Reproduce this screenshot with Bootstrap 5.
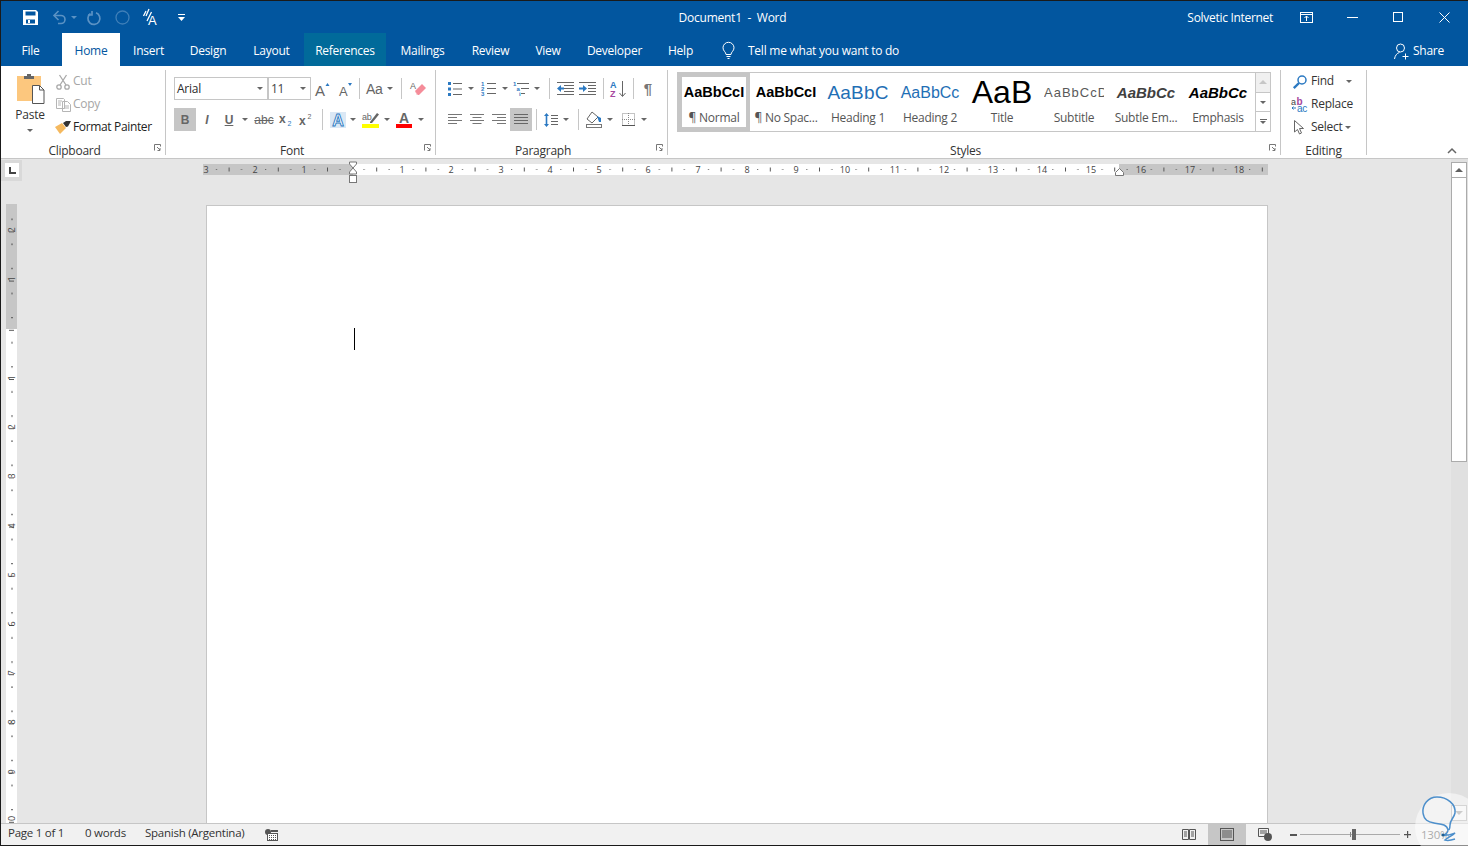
<!DOCTYPE html>
<html lang="en">
<head>
<meta charset="utf-8">
<title>Document1 - Word</title>
<link href="https://cdn.jsdelivr.net/npm/bootstrap@5.3.0/dist/css/bootstrap.min.css" rel="stylesheet">
<style>
html,body{margin:0;height:846px;overflow:hidden;background:#e6e6e6}
body{font-family:"Open Sans","Noto Sans",sans-serif;font-size:12px;letter-spacing:-.25px;color:#333;line-height:1.2}
svg{display:block;flex:none;overflow:visible}
.wd-window{width:1468px;height:846px;border:1px solid #1a1a1a;border-right:0;display:flex;flex-direction:column}
.wd-title{height:32px;background:#02569f;color:#fff;display:grid;grid-template-columns:1fr auto 1fr;align-items:center}
.wd-qat{padding-left:22px}
.wd-titletext{padding:2px 4px 0 0}
.wd-user{margin-right:10px;padding-top:2px;letter-spacing:-.3px}
.wd-winbtns{padding-right:1px}
.wd-winbtn{width:46px;height:32px;display:flex;align-items:center;justify-content:center}
.wd-tabs{height:33px;background:#02569f;flex-wrap:nowrap;align-items:stretch}
.wd-tabs .nav-link{padding:3px 0 0;height:33px;display:flex;align-items:center;justify-content:center;color:#fff;font-size:12px}
.wd-tabs .nav-link.active{background:#fff;color:#02569f}
.wd-tabs .nav-link.wd-hover{background:#016a9a}
.t-file{width:59px;margin-right:2px}.t-home{width:58px}.t-ins{width:57px}.t-des{width:62px}.t-lay{width:65px}.t-ref{width:82px}.t-mai{width:73px}.t-rev{width:63px}.t-vie{width:52px}.t-dev{width:81px}.t-hel{width:51px}
.wd-tell{margin-left:16px;display:flex;align-items:center;gap:13px;color:#fff;padding-top:3px}
.wd-share{margin-left:auto;margin-right:24px;display:flex;align-items:center;gap:4px;color:#fff;padding-top:3px}
.wd-ribbon{height:93px;background:#fff;border-bottom:1px solid #c6c6c6;display:flex;align-items:flex-start;flex:none}
.wd-grp{height:85px;margin-top:4px;border-right:1px solid #c6c6c6;display:flex;flex-direction:column;position:relative;flex:none}
.g-clip{width:165px}.g-font{width:270px;padding:7px 0 0 8px}.g-para{width:232px;padding:7px 0 0 8px}.g-styl{width:613px;padding:2px 0 0 9px}.g-edit{width:86px}
.wd-row{display:flex;align-items:center;height:23px}
.wd-row+.wd-row{margin-top:8px}
.wd-cell{display:flex;align-items:center;justify-content:center;height:23px;flex:none;color:#666}
.c4{width:4px}.c6{width:6px}.c8{width:8px}.c10{width:10px}.c12{width:12px}.c14{width:14px}.c16{width:16px}.c18{width:18px}.c20{width:20px}.c22{width:22px}.c23{width:23px}.c24{width:24px}.c26{width:26px}.c27{width:27px}.c28{width:28px}.c30{width:30px}
.wd-on{background:#c6c6c6}
.wd-sep{width:1px;height:21px;background:#c6c6c6}
.wd-crt{width:0;height:0;border-left:3px solid transparent;border-right:3px solid transparent;border-top:3px solid #666}
.wd-glabel{position:absolute;left:0;right:0;bottom:-1px;height:10px;line-height:10px;text-align:center;color:#333;padding-right:17px}
.g-edit .wd-glabel{padding-right:0}
.wd-launch{position:absolute;right:4px;top:-2px}
.wd-sel{border:1px solid #c6c6c6;height:23px;display:flex;align-items:center;justify-content:space-between;padding:2px 4px 0 2px;color:#2b2b2b;flex:none}
.wd-sel .wd-crt{margin-top:-2px}
.s-face{width:94px}
.s-size{width:43px}
.s-size span{color:#444}
.wd-glyph{font-family:"Liberation Sans",sans-serif;letter-spacing:0;font-size:12px;color:#666;line-height:1}
/* clipboard */
.wd-paste{width:50px;flex:none;display:flex;flex-direction:column;align-items:center;padding-top:3px}
.wd-paste .wd-crt{margin-top:7px}
.wd-clipbody{display:flex;padding-left:4px;height:70px}
.wd-item{display:flex;align-items:center;height:23px;gap:2px;white-space:nowrap}
.wd-item.off{color:#a6a6a6}
.wd-item>.wd-i16{width:16px;display:flex;justify-content:center}
.wd-fp{color:#222;letter-spacing:-.35px}
/* styles */
.wd-gal{width:594px;height:60px;border:1px solid #c6c6c6;display:flex;flex:none}
.wd-stylerow{display:flex;width:577px;flex:none}
.wd-sty{width:72px;height:58px;flex:none;display:flex;flex-direction:column;align-items:center;overflow:hidden;font-family:"Liberation Sans",sans-serif;letter-spacing:0;padding-top:5px}
.wd-sty.cur{border:4px solid #c6c6c6;padding-top:1px}
.wd-sample{height:30px;width:64px;overflow:hidden;white-space:nowrap;display:flex;align-items:center;justify-content:center;color:#000;flex:none}
.wd-sample.narrow{width:60px}
.wd-sample span{display:block;flex:none}
.wd-stylab{font-family:"Open Sans",sans-serif;letter-spacing:-.25px;color:#555;margin-top:3px;white-space:nowrap}
.smp-n{font-weight:700;font-size:14.5px}
.smp-h1{font-size:19px;color:#1f6fb5;letter-spacing:.2px}
.smp-h2{font-size:16px;color:#1f6fb5}
.smp-t{font-size:32px;line-height:30px;margin-bottom:2px}
.smp-s{font-size:13px;letter-spacing:1px;color:#595959}
.smp-e{font-weight:700;font-style:italic;font-size:15px;color:#404040}
.smp-x{font-weight:700;font-style:italic;font-size:15px}
.wd-galbtns{width:15px;border-left:1px solid #c6c6c6;display:flex;flex-direction:column;flex:none}
.wd-galbtns div{flex:1 1 0;display:flex;align-items:center;justify-content:center;flex-direction:column;gap:1px}
.wd-galbtns div+div{border-top:1px solid #c6c6c6}
.wd-galbtns .first{background:#f0f0f0}
.wd-galbtns .first .wd-up{border-bottom-color:#c6c6c6}
.wd-up{width:0;height:0;border-left:4px solid transparent;border-right:4px solid transparent;border-bottom:4px solid #666}
.wd-dash{width:7px;height:1px;background:#666}
/* editing */
.wd-editbody{padding-left:10px}
.wd-editbody .wd-item{gap:3px}
.wd-editbody .wd-i16{width:17px}
.wd-end{flex:1;height:85px;margin-top:4px;position:relative}
.wd-collapse{position:absolute;right:11px;bottom:1px}
/* document area */
.wd-main{flex:1;display:flex;min-height:0;background:#e6e6e6}
.wd-work{flex:1;min-width:0;overflow:hidden;display:flex;flex-direction:column}
.wd-hbar{height:46px;display:flex;flex:none}
.wd-corner{width:21px;height:21px;margin-top:1px;background:#d9d9d9;flex:none;padding:3px 4px}
.wd-corner div{width:14px;height:14px;background:#fff;display:flex;align-items:center;justify-content:center}
.wd-hruler{margin-left:181px;margin-top:2px}
.wd-vbar{flex:1;display:flex;min-height:0}
.wd-vruler{margin-left:5px;margin-right:189px;margin-top:-1px}
.wd-page{width:1062px;background:#fff;border:1px solid #c6c6c6;border-bottom:0;padding:122px 0 0 147px}
.wd-cursor{width:1px;height:22px;background:#000}
.wd-scroll{width:17px;background:#e0e0e0;display:flex;flex-direction:column;padding:3px 1px 2px 0;flex:none}
.wd-sbtn{height:16px;background:#fff;border:1px solid #ababab;display:flex;align-items:center;justify-content:center;flex:none}
.wd-thumb{height:284px;background:#fff;border:1px solid #ababab;border-top:0;flex:none}
.wd-sbtn.dn{margin-top:auto;background:#f1f1f1}
.wd-sdn{width:0;height:0;border-left:4px solid transparent;border-right:4px solid transparent;border-top:4px solid #999}
.wd-sup{width:0;height:0;border-left:4px solid transparent;border-right:4px solid transparent;border-bottom:4px solid #606060}
/* status */
.wd-status{height:22px;background:#f1f1f1;border-top:1px solid #c6c6c6;display:flex;align-items:center;flex:none;color:#333;font-size:11.5px;padding-left:7px}
.wd-st1,.wd-st2,.wd-st3{padding-bottom:3px}
.wd-st1{width:77px}.wd-st2{width:60px}.wd-st3{width:120px}
.wd-view{width:38px;height:21px;display:flex;align-items:center;justify-content:center;flex:none}
.wd-right{margin-left:auto;display:flex;align-items:center;height:21px}
.wd-views{margin-right:-1px}
.wd-zminus{margin-left:7px}
.wd-zbar{margin:0 4px 0 3px}
.wd-zoom{width:57px;padding-left:10px;color:#555}
.wd-mark{position:absolute;left:1414px;top:792px;pointer-events:none}
</style>
</head>
<body>
<div class="wd-window">
  <!-- Title bar -->
  <div class="wd-title">
    <div class="wd-qat d-flex align-items-center">
      <svg width="15" height="15" viewBox="0 0 15 15" style="margin-right:14px"><path fill="#fff" fill-rule="evenodd" d="M0 0h13l2 2v13H0zM2.500 1.500v4h10v-4zM3 9.500v4h9v-4z"/><rect x="5" y="10" width="2" height="3" fill="#fff"/></svg>
      <svg width="15" height="14" viewBox="0 0 15 14" fill="none" stroke="#5b92c4" stroke-width="1.600"><path d="M2.500 5.500H9a4 4 0 0 1 0 8H6"/><path d="M6.500 1 2 5.500 6.500 10"/></svg>
      <span class="wd-crt ms-1" style="border-top-color:#5b92c4"></span>
      <svg width="15" height="15" viewBox="0 0 15 15" fill="none" stroke="#5b92c4" stroke-width="1.700" style="margin-left:9px"><path d="M4.500 3.500a6 6 0 1 0 5.500-.7"/><path d="M6 1v4H2"/></svg>
      <svg width="15" height="15" viewBox="0 0 15 15" fill="none" stroke="#3f7fb8" stroke-width="1.300" style="margin-left:14px"><circle cx="7.500" cy="7.500" r="6.500"/></svg>
      <svg width="16" height="17" viewBox="0 0 16 17" style="margin-left:13px"><path d="M3 2 .5 7M6 0 3 7M8.500 3l-4.500 9" stroke="#fff" stroke-width="1.300" fill="none"/><text x="5" y="16" font-family="Liberation Sans" font-size="13" fill="#fff">A</text></svg>
      <svg width="7" height="7" viewBox="0 0 7 7" style="margin-left:19px"><path d="M0 .5h7" stroke="#fff"/><path d="M0 3h7L3.500 7z" fill="#fff"/></svg>
    </div>
    <div class="wd-titletext">Document1&nbsp; -&nbsp; Word</div>
    <div class="d-flex align-items-center justify-content-end wd-winbtns">
      <span class="wd-user">Solvetic Internet</span>
      <span class="wd-winbtn"><svg width="13" height="11" viewBox="0 0 13 11" fill="none" stroke="#fff"><rect x=".5" y=".5" width="12" height="10"/><path d="M.5 2.500h12M6.500 9V4M4.500 6l2-2 2 2"/></svg></span>
      <span class="wd-winbtn"><svg width="11" height="1"><rect width="11" height="1" fill="#fff"/></svg></span>
      <span class="wd-winbtn"><svg width="10" height="10" fill="none" stroke="#fff"><rect x=".5" y=".5" width="9" height="9"/></svg></span>
      <span class="wd-winbtn"><svg width="11" height="11" fill="none" stroke="#fff"><path d="M.5.500l10 10M10.500.500l-10 10"/></svg></span>
    </div>
  </div>
  <!-- Tabs -->
  <ul class="nav wd-tabs">
    <li class="nav-item"><a class="nav-link t-file" href="#">File</a></li>
    <li class="nav-item"><a class="nav-link active t-home" href="#">Home</a></li>
    <li class="nav-item"><a class="nav-link t-ins" href="#">Insert</a></li>
    <li class="nav-item"><a class="nav-link t-des" href="#">Design</a></li>
    <li class="nav-item"><a class="nav-link t-lay" href="#">Layout</a></li>
    <li class="nav-item"><a class="nav-link wd-hover t-ref" href="#">References</a></li>
    <li class="nav-item"><a class="nav-link t-mai" href="#">Mailings</a></li>
    <li class="nav-item"><a class="nav-link t-rev" href="#">Review</a></li>
    <li class="nav-item"><a class="nav-link t-vie" href="#">View</a></li>
    <li class="nav-item"><a class="nav-link t-dev" href="#">Developer</a></li>
    <li class="nav-item"><a class="nav-link t-hel" href="#">Help</a></li>
    <li class="wd-tell"><svg width="13" height="18" viewBox="0 0 13 18" fill="none" stroke="#fff"><path d="M4 12.500C4 10 1 9 1 5.800a5.500 5.500 0 0 1 11 0C12 9 9 10 9 12.500zM4.500 14.500h4M5.500 16.500h2"/></svg><span>Tell me what you want to do</span></li>
    <li class="wd-share"><svg width="15" height="17" viewBox="0 0 15 17" fill="none" stroke="#fff"><circle cx="6.500" cy="5" r="4"/><path d="M.5 16c.5-3.500 2.500-6 5-6.500M11.500 10.500v6M8.500 13.500h6"/></svg><span>Share</span></li>
  </ul>
  <!-- Ribbon -->
  <div class="wd-ribbon">
    <!-- Clipboard -->
    <section class="wd-grp g-clip">
      <div class="wd-clipbody">
        <div class="wd-paste">
          <svg width="29" height="32" viewBox="0 0 29 32"><rect x="1" y="3" width="24" height="25" fill="#fcc77e"/><path d="M8 6V3h3V1h4v2h3v3z" fill="#666"/><path d="M16.500 12.500h7l4.500 4.500v13.500H16.500z" fill="#fff" stroke="#555"/><path d="M23.500 12.500V17H28" fill="none" stroke="#555"/></svg>
          <span style="margin-top:3px">Paste</span>
          <span class="wd-crt"></span>
        </div>
        <div>
          <div class="wd-item off"><span class="wd-i16"><svg width="14" height="16" viewBox="0 0 14 16" fill="none" stroke="#a9a9a9" stroke-width="1.300"><circle cx="3" cy="13" r="2.200"/><circle cx="11" cy="13" r="2.200"/><path d="M4 11 10.500 1M10 11 3.500 1"/></svg></span><span>Cut</span></div>
          <div class="wd-item off"><span class="wd-i16"><svg width="15" height="14" viewBox="0 0 15 14" fill="none" stroke="#b5b5b5"><path d="M.5.500h7l1 1v9H.5zM6.500 3.500h5l3 3v7h-8zM2 3h4M2 5h3M2 7h3M8 8h5M8 10h5"/></svg></span><span>Copy</span></div>
          <div class="wd-item"><span class="wd-i16"><svg width="16" height="14" viewBox="0 0 16 14"><path d="M0 6 7 2l4 5-6 6z" fill="#f5b95f"/><path d="M8 2 11 0h5l-3 5.500L11 6z" fill="#333"/></svg></span><span class="wd-fp">Format Painter</span></div>
        </div>
      </div>
      <div class="wd-glabel">Clipboard<svg class="wd-launch" width="7" height="7" viewBox="0 0 7 7" fill="none" stroke="#777"><path d="M.5 6.500v-6h6v2"/><path d="M3 3l3 3M6 4v2.500H3.500"/></svg></div>
    </section>
    <!-- Font -->
    <section class="wd-grp g-font">
      <div class="wd-row">
        <div class="wd-sel s-face">Arial<span class="wd-crt"></span></div>
        <div class="wd-sel s-size"><span>11</span><span class="wd-crt"></span></div>
        <div class="wd-cell c23"><svg width="15" height="14" viewBox="0 0 15 14"><text x="0" y="14" font-family="Liberation Sans" font-size="15" fill="#666">A</text><path d="M10.500 4h4l-2-3z" fill="#2b79c2"/></svg></div>
        <div class="wd-cell c23"><svg width="14" height="14" viewBox="0 0 14 14"><text x="0" y="14" font-family="Liberation Sans" font-size="13" fill="#666">A</text><path d="M9 1h4l-2 3z" fill="#2b79c2"/></svg></div>
        <div class="wd-cell c4"><span class="wd-sep"></span></div>
        <div class="wd-cell c26"><svg width="18" height="14" viewBox="0 0 18 14"><text x="1" y="12" font-family="Liberation Sans" font-size="14" fill="#666">Aa</text></svg></div>
        <div class="wd-cell c6"><span class="wd-crt"></span></div>
        <div class="wd-cell c16"><span class="wd-sep"></span></div>
        <div class="wd-cell c18"><svg width="17" height="17" viewBox="0 0 17 17"><text x="0" y="9" font-family="Liberation Sans" font-size="9" fill="#666">A</text><path d="M5 11 12 4l4 4-7 7H7z" fill="#f58c99"/><path d="M5 11l3 4H7z" fill="#fbd0d5"/></svg></div>
      </div>
      <div class="wd-row">
        <div class="wd-cell c22 wd-on wd-glyph fw-bold">B</div>
        <div class="wd-cell c22 wd-glyph fst-italic fw-bold">I</div>
        <div class="wd-cell c22 wd-glyph fw-bold text-decoration-underline">U</div>
        <div class="wd-cell c10"><span class="wd-crt"></span></div>
        <div class="wd-cell c28 wd-glyph"><span class="text-decoration-line-through">abc</span></div>
        <div class="wd-cell c16"><svg width="14" height="12" viewBox="0 0 14 12"><text x="0" y="9" font-family="Liberation Sans" font-size="12" font-weight="700" fill="#666">x</text><text x="8.500" y="11.500" font-family="Liberation Sans" font-size="7" fill="#2b79c2">2</text></svg></div>
        <div class="wd-cell c24"><svg width="14" height="12" viewBox="0 0 14 12"><text x="0" y="11" font-family="Liberation Sans" font-size="12" font-weight="700" fill="#666">x</text><text x="8.500" y="5" font-family="Liberation Sans" font-size="7" fill="#666">2</text></svg></div>
        <div class="wd-cell c8"><span class="wd-sep"></span></div>
        <div class="wd-cell c23"><svg width="16" height="16" viewBox="0 0 16 16"><rect width="16" height="16" fill="#dbe8f5"/><text x="8" y="14" text-anchor="middle" font-family="Liberation Sans" font-size="16" font-weight="700" fill="#fff" stroke="#2b79c2" stroke-width=".9">A</text></svg></div>
        <div class="wd-cell c8"><span class="wd-crt"></span></div>
        <div class="wd-cell c27"><svg width="17" height="16" viewBox="0 0 17 16"><text x="0" y="8" font-family="Liberation Sans" font-size="9" fill="#666">ab</text><path d="M8 10 15 1l2 1.500-7 8.500H8z" fill="#666"/><rect y="12" width="17" height="4" fill="#ff0"/></svg></div>
        <div class="wd-cell c6"><span class="wd-crt"></span></div>
        <div class="wd-cell c28"><svg width="16" height="16" viewBox="0 0 16 16"><text x="8" y="11" text-anchor="middle" font-family="Liberation Sans" font-size="14" font-weight="700" fill="#666">A</text><rect y="12" width="16" height="4" fill="#f00"/></svg></div>
        <div class="wd-cell c6"><span class="wd-crt"></span></div>
      </div>
      <div class="wd-glabel">Font<svg class="wd-launch" width="7" height="7" viewBox="0 0 7 7" fill="none" stroke="#777"><path d="M.5 6.500v-6h6v2"/><path d="M3 3l3 3M6 4v2.500H3.500"/></svg></div>
    </section>
    <!-- Paragraph -->
    <section class="wd-grp g-para">
      <div class="wd-row">
        <div class="wd-cell c22"><svg width="14" height="14" viewBox="0 0 14 14"><path d="M5 1.500h9M5 7h9M5 12.500h9" stroke="#666"/><path d="M0 0h3v3H0zM0 5.500h3v3H0zM0 11h3v3H0z" fill="#2b79c2"/></svg></div>
        <div class="wd-cell c10"><span class="wd-crt"></span></div>
        <div class="wd-cell c24"><svg width="15" height="15" viewBox="0 0 15 15"><path d="M6 2.500h9M6 7.500h9M6 12.500h9" stroke="#666"/><text x="0" y="5" font-family="Liberation Sans" font-size="6" font-weight="700" fill="#2b79c2">1</text><text x="0" y="10" font-family="Liberation Sans" font-size="6" font-weight="700" fill="#2b79c2">2</text><text x="0" y="15" font-family="Liberation Sans" font-size="6" font-weight="700" fill="#2b79c2">3</text></svg></div>
        <div class="wd-cell c10"><span class="wd-crt"></span></div>
        <div class="wd-cell c22"><svg width="16" height="16" viewBox="0 0 16 16"><path d="M4 2.500h12M8 7.500h8M8 12.500h4" stroke="#666"/><text x="0" y="5" font-family="Liberation Sans" font-size="6" font-weight="700" fill="#2b79c2">1</text><text x="3.500" y="10" font-family="Liberation Sans" font-size="6" font-weight="700" fill="#2b79c2">a</text><text x="6" y="15" font-family="Liberation Sans" font-size="6" font-weight="700" fill="#2b79c2">i</text></svg></div>
        <div class="wd-cell c10"><span class="wd-crt"></span></div>
        <div class="wd-cell c14"><span class="wd-sep"></span></div>
        <div class="wd-cell c18"><svg width="17" height="13" viewBox="0 0 17 13"><path d="M0 .5h17M7 3.500h10M7 6.500h10M7 9.500h10M0 12.500h17" stroke="#666"/><path d="M0 6.500 4 3v2.500h3v2H4V10z" fill="#2b79c2"/></svg></div>
        <div class="wd-cell c26"><svg width="17" height="13" viewBox="0 0 17 13"><path d="M0 .5h17M9 3.500h8M9 6.500h8M9 9.500h8M0 12.500h17" stroke="#666"/><path d="M8 6.500 4 3v2.500H0v2h4V10z" fill="#2b79c2"/></svg></div>
        <div class="wd-cell c6"><span class="wd-sep"></span></div>
        <div class="wd-cell c24"><svg width="16" height="18" viewBox="0 0 16 18"><text x="0" y="8" font-family="Liberation Sans" font-size="9" font-weight="700" fill="#2b79c2">A</text><text x="0" y="17" font-family="Liberation Sans" font-size="9" font-weight="700" fill="#a6479e">Z</text><path d="M12.500 1v15M9.500 13l3 3.500 3-3.500" fill="none" stroke="#666"/></svg></div>
        <div class="wd-cell c6"><span class="wd-sep"></span></div>
        <div class="wd-cell c24 wd-glyph fw-bold" style="font-size:15px;color:#777">¶</div>
      </div>
      <div class="wd-row">
        <div class="wd-cell c22"><svg width="14" height="11" viewBox="0 0 14 11"><path d="M0 .5h14M0 3.500h9M0 6.500h14M0 9.500h9" stroke="#777"/></svg></div>
        <div class="wd-cell c22"><svg width="14" height="11" viewBox="0 0 14 11"><path d="M0 .5h14M2.500 3.500h9M0 6.500h14M2.500 9.500h9" stroke="#777"/></svg></div>
        <div class="wd-cell c22"><svg width="14" height="11" viewBox="0 0 14 11"><path d="M0 .5h14M5 3.500h9M0 6.500h14M5 9.500h9" stroke="#777"/></svg></div>
        <div class="wd-cell c22 wd-on"><svg width="14" height="11" viewBox="0 0 14 11"><path d="M0 .5h14M0 3.500h14M0 6.500h14M0 9.500h14" stroke="#666"/></svg></div>
        <div class="wd-cell c8"><span class="wd-sep"></span></div>
        <div class="wd-cell c22"><svg width="14" height="16" viewBox="0 0 14 16"><path d="M7 3.500h7M7 6.500h7M7 9.500h7M7 12.500h7" stroke="#666"/><path d="M2.500 1 5 4H3.300v8H5l-2.500 3L0 12h1.700V4H0z" fill="#2b79c2"/></svg></div>
        <div class="wd-cell c8"><span class="wd-crt"></span></div>
        <div class="wd-cell c16"><span class="wd-sep"></span></div>
        <div class="wd-cell c16"><svg width="16" height="17" viewBox="0 0 16 17"><path d="M6 1 1 8l5 4 6-6z" fill="#fff" stroke="#666"/><path d="M11 5l4 2v4h-2z" fill="#2b79c2"/><rect x=".5" y="13.500" width="15" height="3" fill="#fff" stroke="#777"/></svg></div>
        <div class="wd-cell c16"><span class="wd-crt"></span></div>
        <div class="wd-cell c20"><svg width="13" height="13" viewBox="0 0 13 13" fill="none" stroke="#888" stroke-dasharray="1 1"><rect x=".5" y=".5" width="12" height="12"/><path d="M6.500 0v13M0 6.500h13"/><path d="M0 12.500h13" stroke="#555" stroke-dasharray="none"/></svg></div>
        <div class="wd-cell c12"><span class="wd-crt"></span></div>
      </div>
      <div class="wd-glabel">Paragraph<svg class="wd-launch" width="7" height="7" viewBox="0 0 7 7" fill="none" stroke="#777"><path d="M.5 6.500v-6h6v2"/><path d="M3 3l3 3M6 4v2.500H3.500"/></svg></div>
    </section>
    <!-- Styles -->
    <section class="wd-grp g-styl">
      <div class="wd-gal">
        <div class="wd-stylerow">
          <div class="wd-sty cur"><div class="wd-sample"><span class="smp-n">AaBbCcI</span></div><div class="wd-stylab">¶ Normal</div></div>
          <div class="wd-sty"><div class="wd-sample"><span class="smp-n">AaBbCcI</span></div><div class="wd-stylab">¶ No Spac...</div></div>
          <div class="wd-sty"><div class="wd-sample"><span class="smp-h1">AaBbC</span></div><div class="wd-stylab">Heading 1</div></div>
          <div class="wd-sty"><div class="wd-sample"><span class="smp-h2">AaBbCc</span></div><div class="wd-stylab">Heading 2</div></div>
          <div class="wd-sty"><div class="wd-sample"><span class="smp-t">AaB</span></div><div class="wd-stylab">Title</div></div>
          <div class="wd-sty"><div class="wd-sample narrow justify-content-start"><span class="smp-s">AaBbCcD</span></div><div class="wd-stylab">Subtitle</div></div>
          <div class="wd-sty"><div class="wd-sample"><span class="smp-e">AaBbCc</span></div><div class="wd-stylab">Subtle Em...</div></div>
          <div class="wd-sty"><div class="wd-sample"><span class="smp-x">AaBbCc</span></div><div class="wd-stylab">Emphasis</div></div>
        </div>
        <div class="wd-galbtns ms-auto">
          <div class="first"><span class="wd-up"></span></div>
          <div><span class="wd-crt"></span></div>
          <div><span class="wd-dash"></span><span class="wd-crt"></span></div>
        </div>
      </div>
      <div class="wd-glabel">Styles<svg class="wd-launch" width="7" height="7" viewBox="0 0 7 7" fill="none" stroke="#777"><path d="M.5 6.500v-6h6v2"/><path d="M3 3l3 3M6 4v2.500H3.500"/></svg></div>
    </section>
    <!-- Editing -->
    <section class="wd-grp g-edit">
      <div class="wd-editbody">
        <div class="wd-item"><span class="wd-i16"><svg width="14" height="14" viewBox="0 0 14 14" fill="none" stroke="#2b79c2" stroke-width="1.500"><circle cx="9" cy="5" r="4"/><path d="M6 8 .8 13.200" stroke-width="2.400"/></svg></span><span>Find</span><span class="wd-crt" style="margin-left:9px"></span></div>
        <div class="wd-item"><span class="wd-i16"><svg width="17" height="16" viewBox="0 0 17 16"><text x="0" y="7.500" font-family="Liberation Sans" font-size="9" fill="#444">a</text><text x="5.500" y="7.500" font-family="Liberation Sans" font-size="10" font-weight="700" fill="#a6479e">b</text><text x="6" y="15" font-family="Liberation Sans" font-size="10" fill="#2b79c2">ac</text><path d="M5 11H1M2.500 9.500 1 11l1.500 1.500" fill="none" stroke="#2b79c2"/></svg></span><span>Replace</span></div>
        <div class="wd-item"><span class="wd-i16"><svg width="11" height="15" viewBox="0 0 11 15" fill="#fff" stroke="#666"><path d="M.5.500v11.500l3-2.500 2 4.500 2-1-2-4.500h4z"/></svg></span><span>Select</span><span class="wd-crt" style="margin-left:-1px"></span></div>
      </div>
      <div class="wd-glabel">Editing</div>
    </section>
    <div class="wd-end"><svg class="wd-collapse" width="10" height="6" viewBox="0 0 10 6" fill="none" stroke="#666" stroke-width="1.500"><path d="M1 5l4-4 4 4"/></svg></div>
  </div>
  <!-- Document -->
  <div class="wd-main">
    <div class="wd-work">
      <div class="wd-hbar">
        <div class="wd-corner"><div><svg width="7" height="7"><path d="M1 0v6h6" fill="none" stroke="#444" stroke-width="2"/></svg></div></div>
        <svg class="wd-hruler" width="1066" height="26" viewBox="0 0 1066 26">
          <defs><pattern id="hp" x="1" y="3" width="49.200" height="11" patternUnits="userSpaceOnUse"><rect x="12" y="5" width="1" height="1" fill="#555"/><rect x="24.600" y="3.500" width="1" height="4" fill="#555"/><rect x="37" y="5" width="1" height="1" fill="#555"/></pattern></defs>
          <rect x="0" y="3" width="150" height="11" fill="#c6c6c6"/>
          <rect x="150" y="3" width="766" height="11" fill="#fff"/>
          <rect x="916" y="3" width="149" height="11" fill="#c6c6c6"/>
          <rect x="0" y="3" width="1065" height="11" fill="url(#hp)"/>
          <g font-family="Open Sans" font-size="9" fill="#444" text-anchor="middle" letter-spacing="0">
            <text x="3" y="12">3</text><text x="52" y="12">2</text><text x="101" y="12">1</text><text x="199" y="12">1</text><text x="248" y="12">2</text><text x="298" y="12">3</text><text x="347" y="12">4</text><text x="396" y="12">5</text><text x="445" y="12">6</text><text x="495" y="12">7</text><text x="544" y="12">8</text><text x="593" y="12">9</text><text x="642" y="12">10</text><text x="692" y="12">11</text><text x="741" y="12">12</text><text x="790" y="12">13</text><text x="839" y="12">14</text><text x="888" y="12">15</text><text x="938" y="12">16</text><text x="987" y="12">17</text><text x="1036" y="12">18</text>
          </g>
          <path d="M146.500 1h7v2l-3.500 4 3.500 4v2h-7v-2l3.500-4-3.500-4z" fill="#fff" stroke="#777"/>
          <rect x="146.500" y="14.500" width="7" height="7" fill="#fff" stroke="#777"/>
          <path d="M912.500 14.500v-3l4-4 4 4v3z" fill="#fff" stroke="#777"/>
        </svg>
      </div>
      <div class="wd-vbar">
        <svg class="wd-vruler" width="11" height="625" viewBox="0 0 11 625">
          <defs><pattern id="vp" x="0" y="2.800" width="11" height="49.200" patternUnits="userSpaceOnUse"><rect x="5" y="12" width="2" height="1" fill="#555"/><rect x="3" y="24.600" width="5" height="1" fill="#555"/><rect x="5" y="37" width="2" height="1" fill="#555"/></pattern></defs>
          <rect width="11" height="125" fill="#c6c6c6"/>
          <rect y="125" width="11" height="500" fill="#fff"/>
          <rect width="11" height="625" fill="url(#vp)"/>
          <g font-family="Open Sans" font-size="9" fill="#444" text-anchor="middle" letter-spacing="0">
            <text transform="translate(9 26) rotate(-90)">2</text><text transform="translate(9 75) rotate(-90)">1</text><text transform="translate(9 174) rotate(-90)">1</text><text transform="translate(9 223) rotate(-90)">2</text><text transform="translate(9 272) rotate(-90)">3</text><text transform="translate(9 322) rotate(-90)">4</text><text transform="translate(9 371) rotate(-90)">5</text><text transform="translate(9 420) rotate(-90)">6</text><text transform="translate(9 469) rotate(-90)">7</text><text transform="translate(9 518) rotate(-90)">8</text><text transform="translate(9 568) rotate(-90)">9</text><text transform="translate(9 617) rotate(-90)">10</text>
          </g>
        </svg>
        <div class="wd-page"><div class="wd-cursor"></div></div>
      </div>
    </div>
    <div class="wd-scroll">
      <div class="wd-sbtn"><span class="wd-sup"></span></div>
      <div class="wd-thumb"></div>
      <div class="wd-sbtn dn"><span class="wd-sdn"></span></div>
    </div>
  </div>
  <!-- Status bar -->
  <div class="wd-status">
    <span class="wd-st1">Page 1 of 1</span>
    <span class="wd-st2">0 words</span>
    <span class="wd-st3">Spanish (Argentina)</span>
    <svg width="13" height="12" viewBox="0 0 13 12"><circle cx="3" cy="3" r="3" fill="#555"/><path d="M6 1h7v2H6z" fill="#555"/><rect x="2.500" y="4.500" width="10" height="7" fill="#fff" stroke="#555"/><path d="M4 6.500h7M4 8.500h7M4 10.500h7" stroke="#555" stroke-dasharray="1 1"/></svg>
    <div class="wd-right">
      <span class="wd-view"><svg width="14" height="13" viewBox="0 0 14 13" fill="none" stroke="#555"><path d="M.5 1.500h6v10h-6zM7.500 1.500h6v10h-6zM2 4h3M2 6h3M2 8h3M9 4h3M9 6h3M9 8h3"/></svg></span>
      <span class="wd-view wd-on"><svg width="14" height="13" viewBox="0 0 14 13" fill="none" stroke="#555"><rect x=".5" y=".5" width="13" height="12"/><path d="M2 3h10M2 5h10M2 7h10M2 9h10"/></svg></span>
      <span class="wd-view"><svg width="14" height="13" viewBox="0 0 14 13"><path d="M.5.500h10v8H.5zM2 3h7M2 5h7" fill="none" stroke="#555"/><circle cx="10" cy="9" r="4" fill="#555"/></svg></span>
      <svg width="7" height="2" class="wd-zminus" style="margin-left:6px"><rect width="7" height="2" fill="#555"/></svg>
      <svg width="100" height="11" viewBox="0 0 100 11" style="margin:0 4px 0 3px"><rect y="5" width="100" height="1" fill="#aaa"/><rect x="50" y="3" width="1" height="5" fill="#888"/><rect x="52" y="0" width="4" height="11" fill="#666"/></svg>
      <svg width="7" height="7"><path d="M0 3h7v1.200H0zM3 0h1.200v7H3z" fill="#555"/></svg>
      <span class="wd-zoom">130%</span>
    </div>
  </div>
</div>
<svg class="wd-mark" width="54" height="54" viewBox="0 0 54 54"><circle cx="35" cy="35" r="34" fill="#fff" fill-opacity=".5"/><path d="M23 5C14 5 8 13 9 21 10 28 14 30 20 31 26 32 33 32 34 38 34 41 31 43 29 43 33 44 38 42 41 41 38 44 33 46 31 48 34 49 38 48 41 47M23 5C33 5 42 12 41 21 40 26 36 28 36 33 36 35 36 36 35 38" fill="none" stroke="#4d8fcb" stroke-width="1.500"/><circle cx="29" cy="43" r="1.500" fill="#1d5f92"/></svg>
</body>
</html>
